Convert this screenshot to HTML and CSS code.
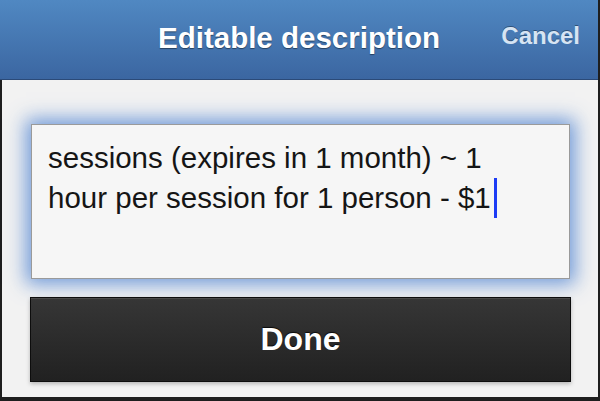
FILE: index.html
```html
<!DOCTYPE html>
<html>
<head>
<meta charset="utf-8">
<link rel="stylesheet" href="styles.css">
</head>
<body>
<div class="screen">
  <header class="bar">
    <span class="bar-side"></span>
    <h1 class="bar-title">Editable description</h1>
    <a class="bar-cancel">Cancel</a>
  </header>
  <main class="content">
    <div class="field">sessions (expires in 1 month) ~ 1 hour per session for 1 person - $1<span class="caret"></span></div>
    <button class="done">Done</button>
  </main>
</div>
</body>
</html>
```

FILE: styles.css
```css
html, body {
  margin: 0;
  padding: 0;
  background: #1c1c1c;
}
.screen {
  width: 600px;
  height: 401px;
  box-sizing: border-box;
  border-right: 2px solid #1e1e1e;
  display: flex;
  flex-direction: column;
  font-family: "Liberation Sans", Arial, sans-serif;
  overflow: hidden;
}
.bar {
  height: 79px;
  flex: none;
  border-bottom: 1px solid #2b4a78;
  background: linear-gradient(#5088c2, #3b66a1);
  display: grid;
  grid-template-columns: 1fr auto 1fr;
  align-items: start;
  padding: 0 18px;
}
.bar-title {
  margin: 0;
  padding-top: 21px;
  font-size: 29.5px;
  line-height: 34px;
  font-weight: bold;
  color: #fff;
  text-shadow: 0 1px 1px rgba(0, 0, 0, 0.45);
}
.bar-cancel {
  justify-self: end;
  padding-top: 19px;
  font-size: 24px;
  line-height: 34px;
  font-weight: bold;
  color: #d6e4f3;
  text-shadow: 0 -1px 0 rgba(0, 0, 0, 0.35);
}
.content {
  flex: 1;
  background: #f2f2f2;
  border-left: 2px solid #1e1e1e;
  border-bottom: 4px solid #1e1e1e;
  padding: 44px 27px 13px 28px;
  display: flex;
  flex-direction: column;
  gap: 18px;
}
.field {
  margin: 0 1px;
  height: 155px;
  box-sizing: border-box;
  border: 1px solid #9a9a9a;
  background: #f6f6f6;
  box-shadow: 0 0 18px 5px rgba(88, 138, 212, 0.85);
  padding: 13px 34px 0 16px;
  font-size: 29.5px;
  line-height: 40px;
  color: #151515;
}
.caret {
  display: inline-block;
  width: 3px;
  height: 40px;
  margin-left: 3px;
  vertical-align: top;
  background: #1d3cf5;
}
.done {
  height: 85px;
  box-sizing: border-box;
  border: 1px solid #0d0d0d;
  background: linear-gradient(#363636, #212121);
  box-shadow: inset 0 1px 0 #4a4a4a, 0 2px 4px rgba(0, 0, 0, 0.25);
  color: #fff;
  font-family: "Liberation Sans", Arial, sans-serif;
  font-size: 32px;
  font-weight: bold;
  text-shadow: 0 -1px 1px rgba(0, 0, 0, 0.8);
  padding: 0;
}
```
